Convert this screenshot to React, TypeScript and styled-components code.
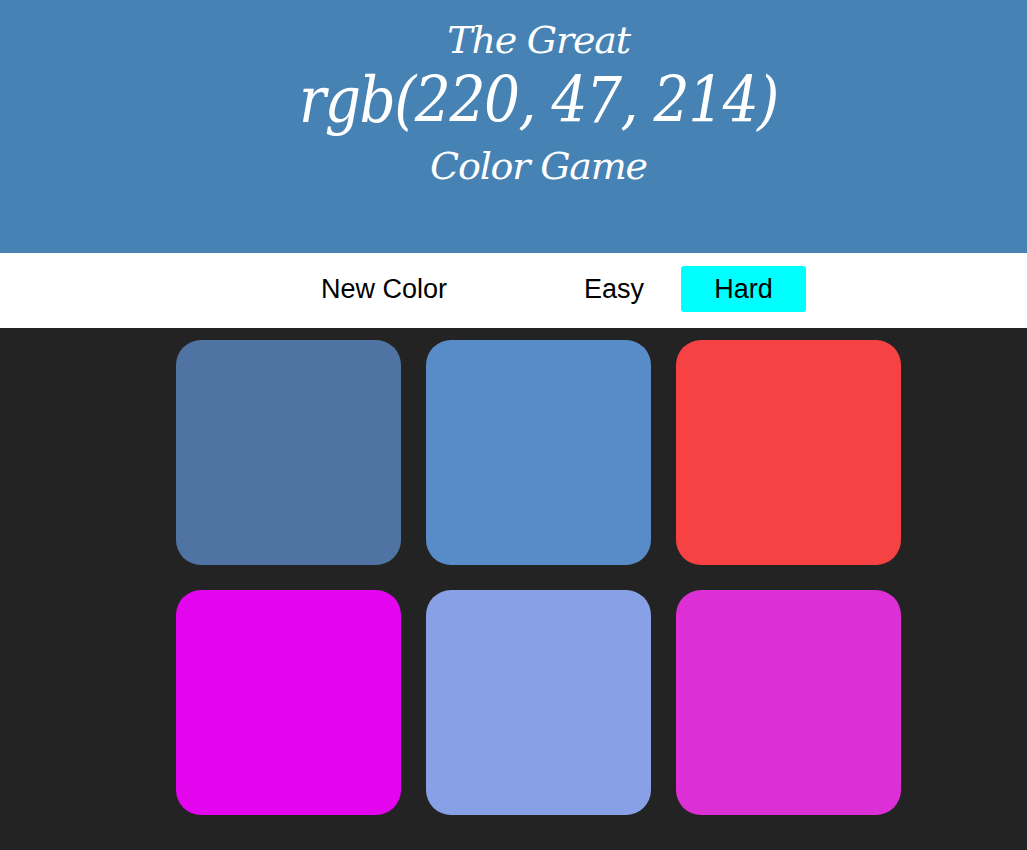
import React from "react";
import styled, { createGlobalStyle } from "styled-components";

const Global = createGlobalStyle`
  html, body { margin: 0; padding: 0; background: #232323; }
  body { font-family: "Liberation Sans", Arial, sans-serif; }
`;

const Page = styled.div`
  padding-left: 50px;
  display: flex;
  flex-direction: column;
`;

const Header = styled.h1`
  margin: 0 0 0 -50px;
  padding: 17px 0 0 50px;
  height: 236px;
  background: #4682b4;
  color: #fff;
  text-align: center;
  font-family: "DejaVu Serif", "Liberation Serif", serif;
  font-style: italic;
  font-weight: normal;
  display: flex;
  flex-direction: column;
  align-items: center;
`;

const Line = styled.span<{ $size: number; $lh: number; $ls?: number; $narrow?: boolean }>`
  display: block;
  font-size: ${(p) => p.$size}px;
  line-height: ${(p) => p.$lh}px;
  letter-spacing: ${(p) => p.$ls ?? 0}px;
  font-stretch: ${(p) => (p.$narrow ? "condensed" : "normal")};
`;

const Bar = styled.div`
  margin-left: -50px;
  padding-left: 50px;
  height: 75px;
  background: #fff;
  display: flex;
  align-items: center;
  justify-content: center;
`;

const Controls = styled.div`
  display: flex;
  align-items: center;
  margin-left: 16px;
  margin-bottom: 3px;
`;

const Btn = styled.button<{ $active?: boolean; $w: number; $mr?: number }>`
  border: none;
  outline: none;
  background: ${(p) => (p.$active ? "#00ffff" : "#fff")};
  color: #000;
  font-family: "Liberation Sans", Arial, sans-serif;
  font-size: 27px;
  width: ${(p) => p.$w}px;
  height: 46px;
  border-radius: 3px;
  padding: 0;
  margin-right: ${(p) => p.$mr ?? 0}px;
  cursor: pointer;
`;

const Grid = styled.div`
  margin: 12px auto 0;
  display: grid;
  grid-template-columns: repeat(3, 225px);
  grid-auto-rows: 225px;
  gap: 25px;
`;

const Square = styled.div<{ $c: string }>`
  background: ${(p) => p.$c};
  border-radius: 25px;
`;

const colors = [
  "rgb(79, 116, 163)",
  "rgb(88, 140, 200)",
  "rgb(246, 66, 66)",
  "rgb(227, 5, 238)",
  "rgb(135, 160, 230)",
  "rgb(220, 47, 214)",
];

export default function App() {
  return (
    <>
      <Global />
      <Page>
        <Header>
          <Line $size={38} $lh={46} $ls={-1.2}>The Great</Line>
          <Line $size={63} $lh={76} $ls={-1.5} $narrow>rgb(220, 47, 214)</Line>
          <Line $size={38} $lh={54} $ls={-1.2}>Color Game</Line>
        </Header>
        <Bar>
          <Controls>
            <Btn $w={194} $mr={70}>New Color</Btn>
            <Btn $w={126} $mr={4}>Easy</Btn>
            <Btn $w={125} $active>Hard</Btn>
          </Controls>
        </Bar>
        <Grid>
          {colors.map((c) => (
            <Square key={c} $c={c} />
          ))}
        </Grid>
      </Page>
    </>
  );
}
